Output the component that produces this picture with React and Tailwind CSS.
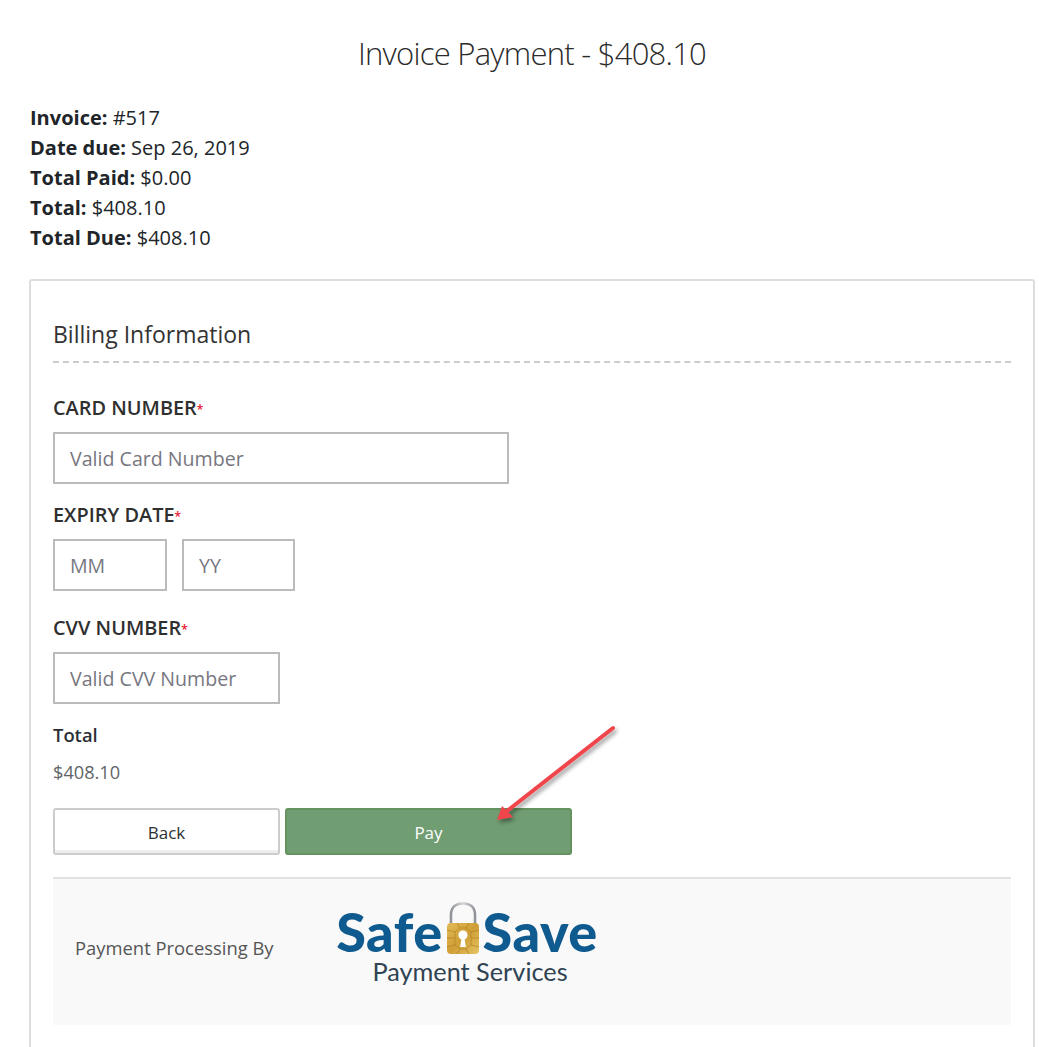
import React from 'react';

function Label({ children }) {
  return (
    <label className="block text-[19.9px] leading-[26px] font-semibold text-[#2f2f2f]">
      {children}
      <span className="text-[12px] text-[#e8112d] align-[1px]">*</span>
    </label>
  );
}

function Field({ placeholder, width }) {
  return (
    <input
      placeholder={placeholder}
      className={`${width} h-[52px] border-2 border-[#bbbbbb] bg-white px-[15px] text-[19.6px] placeholder:text-[#77777f] outline-none`}
    />
  );
}

function SafeSaveLogo() {
  return (
    <div className="flex flex-col items-center w-[262px] mb-[10px]">
      <div className="flex items-end h-[52px]">
        <span className="mb-[2px] font-['Lato',sans-serif] font-black text-[54px] leading-[40px] tracking-[0.5px] text-[#0f5a8f]">Safe</span>
        <svg width="34" height="52" viewBox="0 0 34 52" className="shrink-0 mx-[3px]">
          <defs>
            <linearGradient id="gold" x1="0" y1="0" x2="1" y2="1">
              <stop offset="0" stopColor="#e3bb57" />
              <stop offset="0.5" stopColor="#cf9f35" />
              <stop offset="1" stopColor="#e6c465" />
            </linearGradient>
            <linearGradient id="steel" x1="0" y1="0" x2="1" y2="0">
              <stop offset="0" stopColor="#8f9296" />
              <stop offset="0.5" stopColor="#d3d5d8" />
              <stop offset="1" stopColor="#8f9296" />
            </linearGradient>
          </defs>
          <path d="M5 23V13C5 5 10 1.5 17 1.5S29 5 29 13v10" fill="none" stroke="url(#steel)" strokeWidth="2.6" />
          <rect x="1" y="21" width="32" height="31" rx="4" fill="url(#gold)" />
          <path d="M11 21l3 5h6l3-5M11 52l3-5h6l3 5M9 30l-8-2M9 36H1M9 43l-8 2M25 30l8-2M25 36h8M25 43l8 2M14 26l-5 4v13l5 4M20 26l5 4v13l-5 4" stroke="#b5862a" strokeWidth="0.8" fill="none" />
          <circle cx="17" cy="33" r="4.6" fill="#fff" />
          <path d="M15.6 35h2.8l1.4 10h-5.6z" fill="#fff" />
        </svg>
        <span className="mb-[2px] font-['Lato',sans-serif] font-black text-[54px] leading-[40px] tracking-[0.5px] text-[#0f5a8f]">Save</span>
      </div>
      <div className="mt-[4px] ml-[6px] font-['Lato',sans-serif] text-[25.3px] leading-[26px] text-[#2f4353]">Payment Services</div>
    </div>
  );
}

export default function App() {
  return (
    <div className="relative h-[1047px] overflow-hidden bg-white font-['Open_Sans',sans-serif] text-[#212529] pl-[29px] pr-[4px]">
      {/* Title */}
      <h1 className="pt-[33px] pb-[30px] text-center text-[31px] leading-[40px] font-light tracking-[-0.75px] text-[#2b2b2b]">
        Invoice Payment - $408.10
      </h1>

      {/* Invoice summary */}
      <div className="pl-[1px] text-[20px] leading-[30px]">
        <div><b className="font-bold">Invoice:</b> #517</div>
        <div><b className="font-bold">Date due:</b> Sep 26, 2019</div>
        <div><b className="font-bold">Total Paid:</b> $0.00</div>
        <div><b className="font-bold">Total:</b> $408.10</div>
        <div><b className="font-bold">Total Due:</b> $408.10</div>
      </div>

      {/* Card */}
      <div className="mt-[26px] border-2 border-[#dddddd] rounded-[3px] px-[22px] pt-[35px] pb-[40px]">
        <h2 className="text-[23px] leading-[36px] text-[#333333] pb-[9px] border-b-2 border-dashed border-[#cccccc]">
          Billing Information
        </h2>

        <div className="mt-[32px]"><Label>CARD NUMBER</Label></div>
        <div className="mt-[9px]"><Field placeholder="Valid Card Number" width="w-[456px]" /></div>

        <div className="mt-[18px]"><Label>EXPIRY DATE</Label></div>
        <div className="mt-[9px] flex gap-[15px]">
          <Field placeholder="MM" width="w-[114px]" />
          <Field placeholder="YY" width="w-[113px]" />
        </div>

        <div className="mt-[24px]"><Label>CVV NUMBER</Label></div>
        <div className="mt-[9px]"><Field placeholder="Valid CVV Number" width="w-[227px]" /></div>

        <div className="mt-[18px] text-[18.4px] leading-[26px] font-semibold text-[#2b2f33]">Total</div>
        <div className="mt-[11px] text-[18.2px] leading-[26px] text-[#5f6468]">$408.10</div>

        <div className="mt-[23px] flex gap-[5px]">
          <button className="w-[227px] h-[47px] pt-[2px] bg-white border-2 border-[#cccccc] rounded-[3px] shadow-[inset_0_-3px_0_#eeeeee] text-[17px] text-[#2b2f33]">
            Back
          </button>
          <button className="w-[287px] h-[47px] pt-[2px] bg-[#719d73] border-2 border-[#65925f] rounded-[3px] text-[17px] text-white">
            Pay
          </button>
        </div>

        {/* Processor */}
        <div className="mt-[22px] h-[148px] bg-[#f9f9f9] border-t-2 border-[#e2e2e2] flex items-center pl-[22px] pb-[8px]">
          <span className="w-[261px] text-[18.4px] text-[#555555]">Payment Processing By</span>
          <SafeSaveLogo />
        </div>
      </div>

      {/* Annotation arrow */}
      <svg className="absolute left-[480px] top-[715px] pointer-events-none" width="150" height="120" viewBox="0 0 150 120">
        <defs>
          <filter id="arrowShadow" x="-20%" y="-20%" width="150%" height="150%">
            <feDropShadow dx="2" dy="3" stdDeviation="2" floodColor="#000" floodOpacity="0.4" />
          </filter>
        </defs>
        <g filter="url(#arrowShadow)">
          <path d="M133 13L27 96" stroke="#f0454b" strokeWidth="4" strokeLinecap="round" />
          <path d="M17 105L22 91L33 102Z" fill="#f0454b" />
        </g>
      </svg>
    </div>
  );
}
